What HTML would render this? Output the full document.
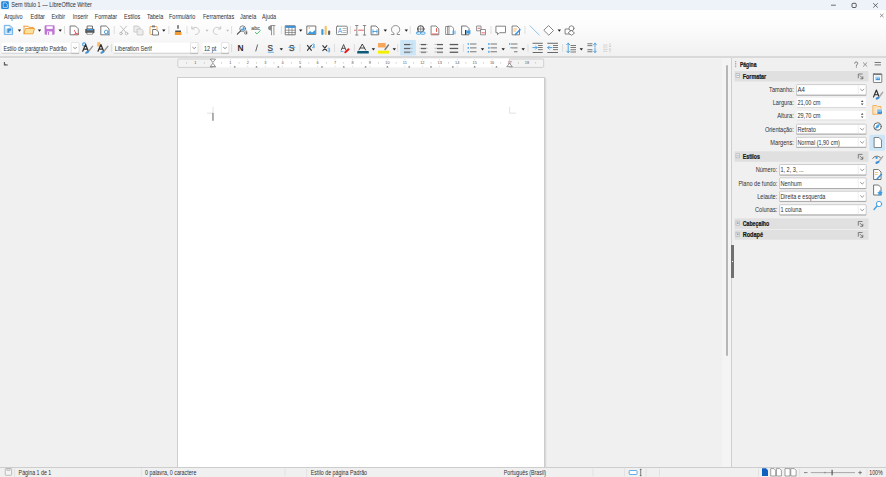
<!DOCTYPE html>
<html><head><meta charset="utf-8">
<style>
*{margin:0;padding:0;box-sizing:border-box}
html,body{width:886px;height:477px;overflow:hidden;background:#f0f0f0;font-family:"Liberation Sans",sans-serif;color:#222}
.a{position:absolute}
.t{position:absolute;white-space:nowrap;font-size:5.5px;line-height:7px}
</style></head><body>
<!-- title bar -->
<div class="a" style="left:0;top:0;width:886px;height:10.4px;background:#eef2f9"></div>
<!-- menu + toolbars -->
<div class="a" style="left:0;top:10.4px;width:886px;height:45.7px;background:linear-gradient(#ffffff 0%,#fdfdfd 30%,#f1f1f1 100%)"></div>
<div class="a" style="left:0;top:56.1px;width:886px;height:1.7px;background:#d9d9d9"></div>
<div class="a" style="left:0;top:57.8px;width:886px;height:0.9px;background:#f4f4f4"></div>
<svg class="a" style="left:0;top:0" width="886" height="22" viewBox="0 0 886 22">
<rect x="1.2" y="1.2" width="7.6" height="7.8" rx="1.3" fill="#1f83d9"></rect>
<path d="M3.2 2.8h2.5l1.6 1.6v3h-4.1z" fill="none" stroke="#fff" stroke-width="0.6"></path>
<path d="M831 5.2h4.8" stroke="#333" stroke-width="0.7"></path>
<rect x="852" y="3.3" width="4.2" height="4.2" rx="1" fill="none" stroke="#333" stroke-width="0.8"></rect>
<path d="M873.2 3.2l4.6 4.4M877.8 3.2l-4.6 4.4" stroke="#333" stroke-width="0.7"></path>
<path d="M880 13.8l3.6 3.4M883.6 13.8l-3.6 3.4" stroke="#555" stroke-width="0.6"></path>
<g font-family="Liberation Sans" font-size="5.5" fill="#222">
<text x="11.3" y="7.40" font-size="6.4" textLength="80.50" lengthAdjust="spacingAndGlyphs" style="font-size: 6.4px; fill: rgb(48, 48, 48);">Sem título 1 — LibreOffice Writer</text>
</g>
<g font-family="Liberation Sans" font-size="5.5" fill="#222">
<text x="4" y="18.50" font-size="6.4" textLength="18.66" lengthAdjust="spacingAndGlyphs" style="font-size: 6.4px; fill: rgb(48, 48, 48);">Arquivo</text>
<text x="30.5" y="18.50" font-size="6.4" textLength="14.38" lengthAdjust="spacingAndGlyphs" style="font-size: 6.4px; fill: rgb(48, 48, 48);">Editar</text>
<text x="51.4" y="18.50" font-size="6.4" textLength="13.77" lengthAdjust="spacingAndGlyphs" style="font-size: 6.4px; fill: rgb(48, 48, 48);">Exibir</text>
<text x="72.8" y="18.50" font-size="6.4" textLength="15.28" lengthAdjust="spacingAndGlyphs" style="font-size: 6.4px; fill: rgb(48, 48, 48);">Inserir</text>
<text x="94.8" y="18.50" font-size="6.4" textLength="22.31" lengthAdjust="spacingAndGlyphs" style="font-size: 6.4px; fill: rgb(48, 48, 48);">Formatar</text>
<text x="124" y="18.50" font-size="6.4" textLength="16.20" lengthAdjust="spacingAndGlyphs" style="font-size: 6.4px; fill: rgb(48, 48, 48);">Estilos</text>
<text x="147" y="18.50" font-size="6.4" textLength="16.22" lengthAdjust="spacingAndGlyphs" style="font-size: 6.4px; fill: rgb(48, 48, 48);">Tabela</text>
<text x="169" y="18.50" font-size="6.4" textLength="26.30" lengthAdjust="spacingAndGlyphs" style="font-size: 6.4px; fill: rgb(48, 48, 48);">Formulário</text>
<text x="203" y="18.50" font-size="6.4" textLength="31.19" lengthAdjust="spacingAndGlyphs" style="font-size: 6.4px; fill: rgb(48, 48, 48);">Ferramentas</text>
<text x="240" y="18.50" font-size="6.4" textLength="16.22" lengthAdjust="spacingAndGlyphs" style="font-size: 6.4px; fill: rgb(48, 48, 48);">Janela</text>
<text x="262" y="18.50" font-size="6.4" textLength="14.08" lengthAdjust="spacingAndGlyphs" style="font-size: 6.4px; fill: rgb(48, 48, 48);">Ajuda</text>
</g>
</svg>
<svg class="a" style="left:0;top:0" width="886" height="58" viewBox="0 0 886 58">
<g fill="none" stroke-linejoin="round" stroke-linecap="round">
<!-- new doc -->
<path d="M4.7 25.4h5.3l2.6 2.6v6.4h-7.9z" fill="#c4e0f7" stroke="#62aae6" stroke-width="0.9"></path>
<rect x="5.6" y="26.3" width="3.6" height="2.3" fill="#fff" stroke="none"></rect>
<path d="M7.4 28.6h3.8v2.1h-1.9v2.1h-1.9z" fill="#3d8fd8" stroke="none"></path>
<rect x="5.6" y="33.1" width="6.1" height="0.6" fill="#fff" stroke="none"></rect>
<!-- open folder -->
<path d="M24 26.2h4l1 1.2h4.3v1.5" fill="#fbd9a5" stroke="#f19a33" stroke-width="0.9"></path>
<path d="M24 26.2v7.6h9l1.5-5.3h-9l-1.5 5.3" fill="#fbe29a" stroke="#f19a33" stroke-width="0.9"></path>
<!-- save -->
<rect x="44.6" y="25.3" width="10" height="9.5" rx="1.2" fill="#c075d6"></rect>
<rect x="46.5" y="26.3" width="6.2" height="2.6" fill="#fff"></rect>
<rect x="47" y="31.5" width="5.2" height="3.3" fill="#fff"></rect>
<rect x="48" y="32" width="1" height="2.8" fill="#c075d6"></rect>
<!-- pdf -->
<path d="M70.5 26h5l2.8 2.8v6h-7.8z" fill="#fff" stroke="#6a6a6a" stroke-width="0.9"></path>
<path d="M74.5 30.5l1.5 3l2.5 0.5M76 33.5l-2 1" stroke="#e84545" stroke-width="0.9"></path>
<!-- print -->
<rect x="87.5" y="26" width="5" height="3" fill="#fff" stroke="#555" stroke-width="0.8"></rect>
<rect x="85.2" y="28.8" width="9.3" height="4.4" rx="1" fill="#5a5a5a"></rect>
<rect x="87" y="29" width="6" height="1.4" fill="#3d9be0"></rect>
<rect x="87.3" y="32.5" width="5.3" height="1.8" fill="#fff" stroke="#666" stroke-width="0.6"></rect>
<!-- preview -->
<path d="M101.2 26h5l2.8 2.8v6h-7.8z" fill="#fff" stroke="#6a6a6a" stroke-width="0.9"></path>
<circle cx="106.2" cy="32" r="1.8" fill="#fff" stroke="#3d9be0" stroke-width="0.9"></circle>
<path d="M107.5 33.3l2 1.7" stroke="#3d9be0" stroke-width="0.9"></path>
<!-- cut -->
<path d="M120.5 26l5.5 6.5M126.5 26l-5.5 6.5" stroke="#b3b3b3" stroke-width="0.8"></path>
<circle cx="121" cy="33.5" r="1.3" stroke="#b3b3b3" stroke-width="0.8"></circle>
<circle cx="126.5" cy="33.5" r="1.3" stroke="#b3b3b3" stroke-width="0.8"></circle>
<!-- copy -->
<path d="M134.3 26h4l1.5 1.5v4.5h-5.5z" fill="#ececec" stroke="#c2c2c2" stroke-width="0.8"></path>
<path d="M137.5 29h4l1.5 1.5v4.5h-5.5z" fill="#ececec" stroke="#c2c2c2" stroke-width="0.8"></path>
<!-- paste -->
<rect x="150" y="26.5" width="7" height="8" rx="0.6" fill="#fff" stroke="#f4a23e" stroke-width="0.9"></rect>
<rect x="152" y="25.5" width="3" height="1.8" fill="#777"></rect>
<path d="M153 29.5h3l2.5 2.5v3h-5.5z" fill="#fff" stroke="#555" stroke-width="0.8"></path>
<!-- clone -->
<rect x="177.3" y="25.2" width="1.4" height="3.5" fill="#555"></rect>
<path d="M175.2 30.5h5.8v2h-5.8z" fill="#555"></path>
<path d="M174.8 32h6.6v3h-6.6z" fill="#f39a2e"></path>
<!-- undo / redo (disabled) -->
<path d="M192 28.5c2.5-2 6-1.5 7 1.5s-1.5 4.5-3.5 4.5" stroke="#c4c4c4" stroke-width="0.9"></path>
<path d="M191.8 26.5v2.5h2.5" stroke="#c4c4c4" stroke-width="0.9"></path>
<path d="M220.5 28.5c-2.5-2-6-1.5-7 1.5s1.5 4.5 3.5 4.5" stroke="#c4c4c4" stroke-width="0.9"></path>
<path d="M220.7 26.5v2.5h-2.5" stroke="#c4c4c4" stroke-width="0.9"></path>
<!-- find & replace -->
<circle cx="242.7" cy="28.7" r="2.9" fill="#fff" stroke="#6a6a6a" stroke-width="0.8"></circle>
<path d="M242.7 26.6a2.1 2.1 0 1 1 -2.1 2.1h2.1z" fill="#4aa3e4"></path>
<path d="M240.7 30.9l-3.4 3.3" stroke="#444" stroke-width="1.1"></path>
<circle cx="245.6" cy="33" r="1.1" stroke="#666" stroke-width="0.8"></circle>
<path d="M246.7 30.8v3.2" stroke="#666" stroke-width="0.8"></path>
<!-- spelling -->
<text x="251.3" y="29.6" font-size="5.3" fill="#666" stroke="#666" stroke-width="0.15" font-family="Liberation Sans">abc</text>
<path d="M255.3 32.4l1.6 1.5l3.5-3.3" stroke="#3cb85c" stroke-width="0.9"></path>
<!-- pilcrow -->
<path d="M271.2 25.5c-1.9 0-3.2 1.1-3.2 2.5s1.3 2.5 3.2 2.5z" fill="#8a8a8a"></path>
<path d="M275 25.5h-4M271.5 25.5v9.3M273.9 25.5v9.3" stroke="#8a8a8a" stroke-width="0.9"></path>
<!-- table -->
<rect x="285.6" y="25.8" width="9.6" height="9" fill="#fff" stroke="#6a6a6a" stroke-width="0.9"></rect>
<rect x="285.6" y="25.8" width="9.6" height="2.1" fill="#3d8fd8"></rect>
<path d="M288.8 27.9v6.9M292 27.9v6.9M285.6 30.2h9.6M285.6 32.5h9.6" stroke="#777" stroke-width="0.7"></path>
<!-- image -->
<rect x="307.2" y="26" width="8.6" height="8.4" fill="#fff" stroke="#666" stroke-width="0.9"></rect>
<path d="M307.5 34l2.5-3l2 1.5l3.5-2.8v4.3z" fill="#3d9be0"></path>
<circle cx="309.3" cy="28" r="0.8" fill="#f4a23e"></circle>
<!-- chart -->
<rect x="321.3" y="29" width="2.2" height="6" rx="1" fill="#3d9be0"></rect>
<rect x="324.6" y="25.7" width="2.2" height="9.3" rx="1" fill="#f6c26a"></rect>
<rect x="328" y="30.5" width="2.2" height="4.5" rx="1" fill="#666"></rect>
<!-- text box -->
<rect x="336.5" y="26.2" width="10.8" height="8.4" rx="0.8" fill="#fff" stroke="#777" stroke-width="0.9"></rect>
<text x="337.8" y="33.3" font-size="6.5" fill="#3d9be0" font-family="Liberation Sans">A</text>
<path d="M343 28.5h3M343 30.5h3M343 32.5h3" stroke="#888" stroke-width="0.6"></path>
<!-- page break -->
<path d="M356.8 25.5v9.5M364.5 25.5v9.5M355.5 25.5h2.6M355.5 35h2.6M363.2 25.5h2.6M363.2 35h2.6" stroke="#777" stroke-width="0.8"></path>
<path d="M358.5 30.2h5" stroke="#d44" stroke-width="0.8" stroke-dasharray="0.8 0.6"></path>
<circle cx="355" cy="30.2" r="0.7" fill="#e33"></circle>
<!-- field -->
<path d="M371.5 26h4.5l2.7 2.7v6.1h-7.2z" fill="#fff" stroke="#666" stroke-width="0.9"></path>
<path d="M373 29.8v3.4M377 29.8v3.4M373 31.5h4" stroke="#3d9be0" stroke-width="0.9"></path>
<!-- omega -->
<path d="M391.5 34.5h2.6v-1c-1.6-0.8-2.6-2.2-2.6-4c0-2.4 1.8-4 4.1-4s4.1 1.6 4.1 4c0 1.8-1 3.2-2.6 4v1h2.6" stroke="#777" stroke-width="0.8"></path>
<!-- hyperlink -->
<circle cx="420.7" cy="29" r="3.3" fill="#fff" stroke="#555" stroke-width="0.9"></circle>
<path d="M417.5 29h6.5M420.7 25.7v6.6M419 26c-1 2-1 4 0 6M422.4 26c1 2 1 4 0 6" stroke="#555" stroke-width="0.6"></path>
<rect x="416.3" y="32" width="4.5" height="2.2" rx="1.1" fill="#fff" stroke="#3d9be0" stroke-width="0.9"></rect>
<rect x="420.6" y="32" width="4.5" height="2.2" rx="1.1" fill="#fff" stroke="#3d9be0" stroke-width="0.9"></rect>
<!-- footnote -->
<path d="M431.5 26h4.5l2.8 2.8v6h-7.3z" fill="#fff" stroke="#777" stroke-width="0.9"></path>
<path d="M436.5 28.5v3M432.5 34h5" stroke="#e04545" stroke-width="0.9"></path>
<!-- endnote -->
<path d="M446 26.5h3v8h-3zM448 26.2h3.5l2 2v6.3h-5.5z" fill="#fff" stroke="#777" stroke-width="0.8"></path>
<path d="M453 31v3M455 31v3" stroke="#3d9be0" stroke-width="0.8"></path>
<!-- bookmark -->
<path d="M462 26h4.5l2.5 2.5v6.3h-7z" fill="#fff" stroke="#666" stroke-width="0.9"></path>
<rect x="465" y="30" width="1.3" height="4.8" fill="#333"></rect>
<path d="M466.3 30.5h4.7l-1 1.5l1 1.5h-4.7z" fill="#3d9be0"></path>
<!-- cross-ref -->
<path d="M477 26h4v4.8h-4z" fill="#fff" stroke="#777" stroke-width="0.8"></path>
<path d="M481 29.5h4.5v5.3h-4.5z" fill="#fff" stroke="#777" stroke-width="0.8"></path>
<path d="M478 28.3h2M482 32.8h2.5" stroke="#e04545" stroke-width="0.8"></path>
<!-- comment -->
<path d="M496.3 26.2h9.2v6.5h-6l-2 2v-2h-1.2z" fill="#fff" stroke="#777" stroke-width="0.9"></path>
<!-- track changes -->
<path d="M512.5 26h4.5l2.5 2.5v6.3h-7z" fill="#fff" stroke="#777" stroke-width="0.9"></path>
<path d="M513.8 29h3M513.8 31h2" stroke="#f39a2e" stroke-width="0.7"></path>
<path d="M515.5 34.5l4.5-4.8" stroke="#3d8fd8" stroke-width="1.5"></path>
<!-- line -->
<path d="M530 25.8l9.3 9.3" stroke="#7cbdea" stroke-width="0.9"></path>
<!-- diamond -->
<path d="M548.8 25.8l4.7 4.7l-4.7 4.7l-4.7-4.7z" fill="#fff" stroke="#777" stroke-width="0.9"></path>
<!-- shapes -->
<rect x="565.5" y="29" width="5" height="5" fill="#fff" stroke="#777" stroke-width="0.9"></rect>
<circle cx="571.5" cy="28.3" r="2.5" fill="#fff" stroke="#777" stroke-width="0.9"></circle>
<path d="M571.5 30.5l3 2.5l-3 2.3l-3-2.3z" fill="#fff" stroke="#777" stroke-width="0.9"></path>
</g>
<!-- dropdown arrows -->
<g fill="#1e1e1e">
<path d="M17.8 29.6h3.4l-1.7 2.2z"></path><path d="M37.8 29.6h3.4l-1.7 2.2z"></path><path d="M58.5 29.6h3.4l-1.7 2.2z"></path>
<path d="M162.1 29.6h3.4l-1.7 2.2z"></path><path d="M299 29.6h3.4l-1.7 2.2z"></path><path d="M383.6 29.6h3.4l-1.7 2.2z"></path>
<path d="M404.6 29.6h3.4l-1.7 2.2z"></path><path d="M557.6 29.6h3.4l-1.7 2.2z"></path>
</g>
<g fill="#bdbdbd"><path d="M205.5 29.8h3l-1.5 2z"></path><path d="M226.2 29.8h3l-1.5 2z"></path></g>
<!-- separators -->
<g fill="#d6d6d6">
<rect x="64.2" y="26" width="0.8" height="8"></rect><rect x="113.8" y="26" width="0.8" height="8"></rect><rect x="168.5" y="26" width="0.8" height="8"></rect>
<rect x="186.6" y="26" width="0.8" height="8"></rect><rect x="231.3" y="26" width="0.8" height="8"></rect><rect x="280.9" y="26" width="0.8" height="8"></rect>
<rect x="349.9" y="26" width="0.8" height="8"></rect><rect x="409.8" y="26" width="0.8" height="8"></rect><rect x="490.6" y="26" width="0.8" height="8"></rect>
<rect x="524.6" y="26" width="0.8" height="8"></rect>
</g>
</svg>

<svg class="a" style="left:0;top:0" width="886" height="58" viewBox="0 0 886 58">
<!-- combos -->
<g>
<rect x="1.7" y="42.6" width="77.3" height="11" fill="#fff"></rect>
<rect x="1.7" y="52.8" width="77.3" height="0.7" fill="#b8b8b8"></rect>
<rect x="71.2" y="42.6" width="7.8" height="11" rx="0.8" fill="#fff" stroke="#d2d2d2" stroke-width="0.6"></rect>
<rect x="71.2" y="52.8" width="7.8" height="0.8" fill="#a8a8a8"></rect>
<path d="M73.3 47.2l1.8 1.4l1.8-1.4" fill="none" stroke="#666" stroke-width="0.7"></path>

<rect x="113.6" y="42.6" width="84.4" height="11" fill="#fff"></rect>
<rect x="113.6" y="52.8" width="84.4" height="0.7" fill="#b8b8b8"></rect>
<rect x="190.5" y="42.6" width="7.5" height="11" rx="0.8" fill="#fff" stroke="#d2d2d2" stroke-width="0.6"></rect>
<rect x="190.5" y="52.8" width="7.5" height="0.8" fill="#a8a8a8"></rect>
<path d="M192.4 47.2l1.8 1.4l1.8-1.4" fill="none" stroke="#666" stroke-width="0.7"></path>

<rect x="202.5" y="42.6" width="26.3" height="11" fill="#fff"></rect>
<rect x="202.5" y="52.8" width="26.3" height="0.7" fill="#b8b8b8"></rect>
<rect x="221.3" y="42.6" width="7.5" height="11" rx="0.8" fill="#fff" stroke="#d2d2d2" stroke-width="0.6"></rect>
<rect x="221.3" y="52.8" width="7.5" height="0.8" fill="#a8a8a8"></rect>
<path d="M223.2 47.2l1.8 1.4l1.8-1.4" fill="none" stroke="#666" stroke-width="0.7"></path>
</g>
<g font-family="Liberation Sans" font-size="5.5" fill="#222">
<text x="3.4" y="50.70" textLength="63.20" lengthAdjust="spacingAndGlyphs" font-size="6.4" style="font-size: 6.4px; fill: rgb(48, 48, 48);">Estilo de parágrafo Padrão</text>
<text x="114.8" y="50.70" font-size="6.4" textLength="37.00" lengthAdjust="spacingAndGlyphs" style="font-size: 6.4px; fill: rgb(48, 48, 48);">Liberation Serif</text>
<text x="204" y="50.70" font-size="6.4" textLength="12.23" lengthAdjust="spacingAndGlyphs" style="font-size: 6.4px; fill: rgb(48, 48, 48);">12 pt</text>
</g>
<g fill="none" stroke-linecap="round" stroke-linejoin="round">
<!-- style icons -->
<circle cx="84.2" cy="44.5" r="1.6" fill="#fff" stroke="#3d9be0" stroke-width="1.1"></circle>
<path d="M82.7 51.2l2.9-6.6l2.7 6.6M83.8 49h3.4" stroke="#303030" stroke-width="1.25"></path>
<ellipse cx="87.2" cy="52.2" rx="2.2" ry="1.1" transform="rotate(-25 87.2 52.2)" fill="#3d8fd8"></ellipse>
<path d="M92.5 46.4l-3.3 4.2" stroke="#9a9a9a" stroke-width="1.5"></path>
<rect x="97.3" y="42.2" width="3" height="4.3" fill="#f7b86a"></rect>
<path d="M98 51.2l2.9-6.6l2.7 6.6M99.1 49h3.4" stroke="#303030" stroke-width="1.25"></path>
<ellipse cx="102.5" cy="52.2" rx="2.2" ry="1.1" transform="rotate(-25 102.5 52.2)" fill="#3d8fd8"></ellipse>
<path d="M107.8 46.4l-3.3 4.2" stroke="#9a9a9a" stroke-width="1.5"></path>
</g>
<g font-family="Liberation Sans" fill="#333">
<text x="237.6" y="50.8" font-size="8.4" font-weight="bold" fill="#2e2e2e">N</text>
<text x="267.6" y="50.7" font-size="8.2" fill="#444" stroke="#444" stroke-width="0.25">S</text>
<text x="289" y="51" font-size="8.2" fill="#444" stroke="#444" stroke-width="0.25">S</text>

</g>
<path d="M257.6 44.5l-1.9 6.9" stroke="#666" stroke-width="1" fill="none"></path>
<rect x="267.8" y="51.8" width="6" height="0.8" fill="#3d9be0"></rect>
<rect x="288.3" y="47" width="7" height="0.7" fill="#3d9be0"></rect>
<g fill="none" stroke-linecap="round">
<path d="M307.4 45.4l4 5M311.4 45.4l-4 5" stroke="#3a3a3a" stroke-width="1.1"></path>
<path d="M312.6 44.3c0.8-0.5 1.8-0.3 1.8 0.6s-0.9 1-1.3 1c0.6 0 1.4 0.3 1.4 1.1s-1.1 1.1-1.9 0.6" stroke="#3d9be0" stroke-width="0.9"></path>
<path d="M322.8 45.6l4 5M326.8 45.6l-4 5" stroke="#3a3a3a" stroke-width="1.1"></path>
<path d="M328 48.4c0.8-0.5 1.8-0.3 1.8 0.6s-0.9 1-1.3 1c0.6 0 1.4 0.3 1.4 1.1s-1.1 1.1-1.9 0.6" stroke="#3d9be0" stroke-width="0.9"></path>
</g>
<g fill="none" stroke-linecap="round" stroke-linejoin="round">
<!-- clear formatting -->
<path d="M341.3 50l2.3-5.5l2.2 5.5M342.2 48.3h2.8" stroke="#444" stroke-width="0.9"></path>
<path d="M341 51.5h2" stroke="#3d9be0" stroke-width="0.7"></path>
<path d="M345.3 52.3l3.3-3" stroke="#e02020" stroke-width="2"></path>
<!-- font color -->
<path d="M359 50l3.3-6l3.3 6M360.2 48h4.2" stroke="#333" stroke-width="0.9"></path>
<rect x="357.2" y="51" width="11.6" height="2.6" rx="0.4" fill="#0d5a78"></rect>
<!-- highlight -->
<rect x="378" y="43" width="7.7" height="4.5" rx="0.5" fill="#f7a65a"></rect>
<path d="M388.5 45l-3.5 4.5" stroke="#777" stroke-width="1.4"></path>
<rect x="378" y="50.7" width="11" height="2.9" fill="#f2f000"></rect>
</g>
<!-- align left highlight -->
<rect x="400.1" y="40" width="15.8" height="15.5" rx="1" fill="#cde6f7"></rect>
<g fill="#5a5a5a">
<rect x="404" y="43.95" width="6.2" height="1.1"></rect><rect x="410.2" y="43.95" width="2.4" height="0.6" fill="#999"></rect><rect x="404" y="45.05" width="6.2" height="0.5" fill="#bbb"></rect>
<rect x="421" y="43.95" width="5" height="1.1"></rect><rect x="419.3" y="43.95" width="1.7" height="0.6" fill="#999"></rect><rect x="426" y="43.95" width="1.7" height="0.6" fill="#999"></rect><rect x="421" y="45.05" width="5" height="0.5" fill="#bbb"></rect>
<rect x="437" y="43.95" width="6" height="1.1"></rect><rect x="434.5" y="43.95" width="2.5" height="0.6" fill="#999"></rect><rect x="437" y="45.05" width="6" height="0.5" fill="#bbb"></rect>
<rect x="449.7" y="43.90" width="8.5" height="1.3"></rect>
<rect x="404" y="47.85" width="6.2" height="1.1"></rect><rect x="410.2" y="47.85" width="2.4" height="0.6" fill="#999"></rect><rect x="404" y="48.95" width="6.2" height="0.5" fill="#bbb"></rect>
<rect x="421" y="47.85" width="5" height="1.1"></rect><rect x="419.3" y="47.85" width="1.7" height="0.6" fill="#999"></rect><rect x="426" y="47.85" width="1.7" height="0.6" fill="#999"></rect><rect x="421" y="48.95" width="5" height="0.5" fill="#bbb"></rect>
<rect x="437" y="47.85" width="6" height="1.1"></rect><rect x="434.5" y="47.85" width="2.5" height="0.6" fill="#999"></rect><rect x="437" y="48.95" width="6" height="0.5" fill="#bbb"></rect>
<rect x="449.7" y="47.80" width="8.5" height="1.3"></rect>
<rect x="404" y="51.65" width="6.2" height="1.1"></rect><rect x="410.2" y="51.65" width="2.4" height="0.6" fill="#999"></rect><rect x="404" y="52.75" width="6.2" height="0.5" fill="#bbb"></rect>
<rect x="421" y="51.65" width="5" height="1.1"></rect><rect x="419.3" y="51.65" width="1.7" height="0.6" fill="#999"></rect><rect x="426" y="51.65" width="1.7" height="0.6" fill="#999"></rect><rect x="421" y="52.75" width="5" height="0.5" fill="#bbb"></rect>
<rect x="437" y="51.65" width="6" height="1.1"></rect><rect x="434.5" y="51.65" width="2.5" height="0.6" fill="#999"></rect><rect x="437" y="52.75" width="6" height="0.5" fill="#bbb"></rect>
<rect x="449.7" y="51.60" width="8.5" height="1.3"></rect>
<!-- bullets -->
<rect x="470" y="43.6" width="6.5" height="0.8"></rect><rect x="470" y="47.5" width="6.5" height="0.8"></rect><rect x="470" y="51.4" width="6.5" height="0.8"></rect>
<rect x="490.5" y="43.6" width="6.5" height="0.8"></rect><rect x="490.5" y="47.5" width="6.5" height="0.8"></rect><rect x="490.5" y="51.4" width="6.5" height="0.8"></rect>
<rect x="511" y="43.6" width="6.5" height="0.8"></rect><rect x="512" y="47.5" width="5.5" height="0.8"></rect><rect x="514" y="51.4" width="3.5" height="0.8"></rect>
<!-- indent -->
<rect x="532.6" y="42.8" width="10.1" height="0.9"></rect><rect x="538" y="45.2" width="4.7" height="0.8"></rect><rect x="538" y="47.2" width="4.7" height="0.8"></rect><rect x="538" y="49.3" width="4.7" height="0.8"></rect><rect x="532.6" y="52" width="10.1" height="0.9"></rect>
<rect x="547.3" y="42.8" width="10.7" height="0.9"></rect><rect x="553" y="45.2" width="5" height="0.8"></rect><rect x="553" y="47.2" width="5" height="0.8"></rect><rect x="553" y="49.3" width="5" height="0.8"></rect><rect x="547.3" y="52" width="10.7" height="0.9"></rect>
<!-- line spacing -->
<rect x="570.5" y="45" width="5.5" height="0.8"></rect><rect x="570.5" y="47.2" width="5.5" height="0.8"></rect><rect x="570.5" y="49.4" width="5.5" height="0.8"></rect><rect x="570.5" y="51.6" width="5.5" height="0.8"></rect>
<rect x="587.4" y="43.4" width="5" height="0.8"></rect><rect x="587.4" y="45.3" width="5" height="0.8"></rect><rect x="587.4" y="49.4" width="5" height="0.8"></rect><rect x="587.4" y="51.4" width="5" height="0.8"></rect>
</g>
<g fill="#3d9be0">
<rect x="467.6" y="43.3" width="1.4" height="1.4"></rect><rect x="467.6" y="47.2" width="1.4" height="1.4"></rect><rect x="467.6" y="51.1" width="1.4" height="1.4"></rect>
<rect x="488.3" y="43" width="1.2" height="2"></rect><rect x="488.3" y="46.9" width="1.2" height="2"></rect><rect x="488.3" y="50.8" width="1.2" height="2"></rect>
<rect x="509" y="43.2" width="1.3" height="1.5"></rect><rect x="510.5" y="47.1" width="1.3" height="1.3"></rect>
</g>
<g fill="none" stroke="#3d9be0" stroke-width="0.9" stroke-linecap="round" stroke-linejoin="round">
<path d="M532.8 47.6h4.2M535.5 46l1.6 1.6l-1.6 1.6"></path>
<path d="M547.8 47.6h4.2M549.4 46l-1.6 1.6l1.6 1.6"></path>
<path d="M568.2 43.2v9.4M566.7 44.7l1.5-1.5l1.5 1.5M566.7 51.1l1.5 1.5l1.5-1.5"></path>
<path d="M595 43.2v4M593.6 44.6l1.4-1.4l1.4 1.4M595 48.5v4M593.6 51.1l1.4 1.4l1.4-1.4"></path>
</g>
<g fill="none" stroke="#cdcdcd" stroke-width="0.8">
<path d="M603 45h4.5M603 47h4.5M603 49.3h4.5M603 51.3h4.5M610 43v4M608.8 45.8l1.2 1.2l1.2-1.2M610 48.5v4M608.8 49.7l1.2-1.2l1.2 1.2"></path>
</g>
<g fill="#1e1e1e">
<path d="M279.6 48.2h3.4l-1.7 2.2z"></path><path d="M371.7 48.2h3.4l-1.7 2.2z"></path><path d="M392.6 48.2h3.4l-1.7 2.2z"></path>
<path d="M480.8 48.2h3.4l-1.7 2.2z"></path><path d="M501.5 48.2h3.4l-1.7 2.2z"></path><path d="M521.5 48.2h3.4l-1.7 2.2z"></path>
<path d="M579.6 48.2h3.4l-1.7 2.2z"></path>
</g>
<g fill="#d6d6d6">
<rect x="111.3" y="44" width="0.8" height="8"></rect><rect x="231.3" y="44" width="0.8" height="8"></rect><rect x="299.6" y="44" width="0.8" height="8"></rect>
<rect x="334.1" y="44" width="0.8" height="8"></rect><rect x="353.9" y="44" width="0.8" height="8"></rect><rect x="397.4" y="44" width="0.8" height="8"></rect>
<rect x="462.9" y="44" width="0.8" height="8"></rect><rect x="527.6" y="44" width="0.8" height="8"></rect><rect x="562.3" y="44" width="0.8" height="8"></rect>
</g>
</svg>

<!-- doc area -->
<div class="a" style="left:0;top:58.6px;width:722px;height:408px;background:#f0f0f0"></div>
<svg class="a" style="left:0;top:56px" width="20" height="20" viewBox="0 56 20 20"><path d="M4.4 62v3h3.4" fill="none" stroke="#555" stroke-width="1.1"></path><path d="M4.4 63.3l2.5 1.7h-2.5z" fill="#666"></path></svg>
<svg class="a" style="left:0;top:56px" width="886" height="22" viewBox="0 56 886 22">
<rect x="212.9" y="59" width="296.65" height="8.4" fill="#fff"></rect>
<path d="M212.9 59h-34.1a1 1 0 0 0 -1 1v6.4a1 1 0 0 0 1 1h34.1" fill="#f3f3f3" stroke="#c6c6c6" stroke-width="0.8"></path>
<path d="M509.55 59h33.15a1 1 0 0 1 1 1v6.4a1 1 0 0 1 -1 1h-33.15z" fill="#f3f3f3" stroke="#c6c6c6" stroke-width="0.8"></path>
<g font-family="Liberation Sans" font-size="3.9" fill="#555" text-anchor="middle">
<text x="195.45" y="64.4">1</text>
<text x="230.35" y="64.4">1</text>
<text x="247.80" y="64.4">2</text>
<text x="265.25" y="64.4">3</text>
<text x="282.70" y="64.4">4</text>
<text x="300.15" y="64.4">5</text>
<text x="317.60" y="64.4">6</text>
<text x="335.05" y="64.4">7</text>
<text x="352.50" y="64.4">8</text>
<text x="369.95" y="64.4">9</text>
<text x="387.40" y="64.4">10</text>
<text x="404.85" y="64.4">11</text>
<text x="422.30" y="64.4">12</text>
<text x="439.75" y="64.4">13</text>
<text x="457.20" y="64.4">14</text>
<text x="474.65" y="64.4">15</text>
<text x="492.10" y="64.4">16</text>
<text x="509.55" y="64.4">17</text>
<text x="527.00" y="64.4">18</text>
</g>
<g fill="#a0a0a0">
<rect x="186.43" y="62.3" width="0.6" height="1.2"></rect>
<rect x="203.88" y="62.3" width="0.6" height="1.2"></rect>
<rect x="221.32" y="62.3" width="0.6" height="1.2"></rect>
<rect x="238.77" y="62.3" width="0.6" height="1.2"></rect>
<rect x="256.22" y="62.3" width="0.6" height="1.2"></rect>
<rect x="273.68" y="62.3" width="0.6" height="1.2"></rect>
<rect x="291.12" y="62.3" width="0.6" height="1.2"></rect>
<rect x="308.57" y="62.3" width="0.6" height="1.2"></rect>
<rect x="326.02" y="62.3" width="0.6" height="1.2"></rect>
<rect x="343.47" y="62.3" width="0.6" height="1.2"></rect>
<rect x="360.93" y="62.3" width="0.6" height="1.2"></rect>
<rect x="378.38" y="62.3" width="0.6" height="1.2"></rect>
<rect x="395.82" y="62.3" width="0.6" height="1.2"></rect>
<rect x="413.27" y="62.3" width="0.6" height="1.2"></rect>
<rect x="430.72" y="62.3" width="0.6" height="1.2"></rect>
<rect x="448.18" y="62.3" width="0.6" height="1.2"></rect>
<rect x="465.62" y="62.3" width="0.6" height="1.2"></rect>
<rect x="483.07" y="62.3" width="0.6" height="1.2"></rect>
<rect x="500.53" y="62.3" width="0.6" height="1.2"></rect>
<rect x="517.98" y="62.3" width="0.6" height="1.2"></rect>
<rect x="535.43" y="62.3" width="0.6" height="1.2"></rect>
<rect x="230.05" y="59.5" width="0.6" height="0.7"></rect>
<rect x="230.05" y="65.9" width="0.6" height="0.7"></rect>
<rect x="247.50" y="59.5" width="0.6" height="0.7"></rect>
<rect x="247.50" y="65.9" width="0.6" height="0.7"></rect>
<rect x="264.95" y="59.5" width="0.6" height="0.7"></rect>
<rect x="264.95" y="65.9" width="0.6" height="0.7"></rect>
<rect x="282.40" y="59.5" width="0.6" height="0.7"></rect>
<rect x="282.40" y="65.9" width="0.6" height="0.7"></rect>
<rect x="299.85" y="59.5" width="0.6" height="0.7"></rect>
<rect x="299.85" y="65.9" width="0.6" height="0.7"></rect>
<rect x="317.30" y="59.5" width="0.6" height="0.7"></rect>
<rect x="317.30" y="65.9" width="0.6" height="0.7"></rect>
<rect x="334.75" y="59.5" width="0.6" height="0.7"></rect>
<rect x="334.75" y="65.9" width="0.6" height="0.7"></rect>
<rect x="352.20" y="59.5" width="0.6" height="0.7"></rect>
<rect x="352.20" y="65.9" width="0.6" height="0.7"></rect>
<rect x="369.65" y="59.5" width="0.6" height="0.7"></rect>
<rect x="369.65" y="65.9" width="0.6" height="0.7"></rect>
<rect x="387.10" y="59.5" width="0.6" height="0.7"></rect>
<rect x="387.10" y="65.9" width="0.6" height="0.7"></rect>
<rect x="404.55" y="59.5" width="0.6" height="0.7"></rect>
<rect x="404.55" y="65.9" width="0.6" height="0.7"></rect>
<rect x="422.00" y="59.5" width="0.6" height="0.7"></rect>
<rect x="422.00" y="65.9" width="0.6" height="0.7"></rect>
<rect x="439.45" y="59.5" width="0.6" height="0.7"></rect>
<rect x="439.45" y="65.9" width="0.6" height="0.7"></rect>
<rect x="456.90" y="59.5" width="0.6" height="0.7"></rect>
<rect x="456.90" y="65.9" width="0.6" height="0.7"></rect>
<rect x="474.35" y="59.5" width="0.6" height="0.7"></rect>
<rect x="474.35" y="65.9" width="0.6" height="0.7"></rect>
<rect x="491.80" y="59.5" width="0.6" height="0.7"></rect>
<rect x="491.80" y="65.9" width="0.6" height="0.7"></rect>
</g>
<g fill="none" stroke="#555" stroke-width="0.6">
<path d="M233.81 67.1h1.8M234.71 67.1v-1"></path>
<path d="M255.62 67.1h1.8M256.52 67.1v-1"></path>
<path d="M277.44 67.1h1.8M278.34 67.1v-1"></path>
<path d="M299.25 67.1h1.8M300.15 67.1v-1"></path>
<path d="M321.06 67.1h1.8M321.96 67.1v-1"></path>
<path d="M342.88 67.1h1.8M343.77 67.1v-1"></path>
<path d="M364.69 67.1h1.8M365.59 67.1v-1"></path>
<path d="M386.50 67.1h1.8M387.40 67.1v-1"></path>
<path d="M408.31 67.1h1.8M409.21 67.1v-1"></path>
<path d="M430.12 67.1h1.8M431.02 67.1v-1"></path>
<path d="M451.94 67.1h1.8M452.84 67.1v-1"></path>
<path d="M473.75 67.1h1.8M474.65 67.1v-1"></path>
<path d="M495.56 67.1h1.8M496.46 67.1v-1"></path>
</g>
<path d="M210.3 59.1h5.2l-2.6 3.4z" fill="#fff" stroke="#6a6a6a" stroke-width="0.7"></path>
<path d="M210.3 66.6h5.2l-2.6 -3.4z" fill="#fff" stroke="#6a6a6a" stroke-width="0.7"></path>
<rect x="210.1" y="66.5" width="5.6" height="0.8" fill="#8a8a8a"></rect>
<path d="M506.75 66.7h5.6l-2.8 -3.4z" fill="#fff" stroke="#6a6a6a" stroke-width="0.7"></path>
</svg>
<!-- page -->
<div class="a" style="left:177px;top:76.7px;width:367.8px;height:392px;background:#fff;border:1px solid #cdcdcd;box-shadow:0.6px 0.6px 1.2px #d2d2d2"></div>
<svg class="a" style="left:0;top:0" width="886" height="477" viewBox="0 0 886 477">
<g fill="none" stroke="#d0d0d0" stroke-width="0.6">
<path d="M213 106.8v6.4h-6M509.6 106.8v6.4h6.4"></path>
</g>
<rect x="212.2" y="112.9" width="1.5" height="7.9" fill="#959595"></rect>
</svg>
<!-- scrollbar -->
<div class="a" style="left:722px;top:58.6px;width:8.6px;height:408px;background:#f4f4f4"></div>
<div class="a" style="left:725.9px;top:65px;width:1.8px;height:291px;background:#b6b6b6;border-radius:1px"></div>
<div class="a" style="left:731px;top:58px;width:155px;height:409px;background:#f0f0f0"></div>
<div class="a" style="left:730.6px;top:58px;width:0.8px;height:409px;background:#cfcfcf"></div>
<div class="a" style="left:731px;top:245px;width:3.3px;height:33px;background:#707070"></div>
<div class="a" style="left:732.2px;top:260.5px;width:1px;height:1.5px;background:#fff"></div>
<svg class="a" style="left:0;top:0" width="886" height="477" viewBox="0 0 886 477">
<!-- grip -->
<g fill="#777"><rect x="735.3" y="61.2" width="0.9" height="0.9"></rect><rect x="735.3" y="62.9" width="0.9" height="0.9"></rect><rect x="735.3" y="64.6" width="0.9" height="0.9"></rect><rect x="735.3" y="66.3" width="0.9" height="0.9"></rect></g>
<!-- header icons -->
<g fill="none" stroke="#555" stroke-width="0.6" stroke-linecap="round">
<path d="M863.3 62.7l3.6 3.6M866.9 62.7l-3.6 3.6"></path>
<path d="M875 62.5h5.5M875 64.9h5.5" stroke-width="0.8"></path>
</g>
<path d="M854.7 63.6c0-1.1 0.7-1.6 1.5-1.6s1.5 0.5 1.5 1.4c0 1.1-1.4 1.2-1.4 2.4v0.3" fill="none" stroke="#555" stroke-width="0.8"></path><rect x="855.9" y="66.6" width="0.9" height="0.9" fill="#555"></rect>
<!-- section header bands -->
<g fill="#e0e0e0">
<rect x="734.5" y="71" width="134" height="10.5"></rect>
<rect x="734.5" y="151.3" width="134" height="10.6"></rect>
<rect x="734.5" y="218.4" width="134" height="10.6"></rect>
<rect x="734.5" y="229.8" width="134" height="9.9"></rect>
</g>
<g fill="#f2f2f2" stroke="#a8a8a8" stroke-width="0.6">
<rect x="736" y="73.4" width="3.6" height="4.1"></rect>
<rect x="736" y="153.8" width="3.6" height="4.1"></rect>
<rect x="736" y="221.1" width="3.6" height="4.1"></rect>
<rect x="736" y="232.2" width="3.6" height="4.1"></rect>
</g>
<g fill="none" stroke="#5a7fb0" stroke-width="0.6">
<path d="M736.8 75.45h2M736.8 155.85h2M736.8 223.15h2M737.8 222.1v2.1M736.8 234.25h2M737.8 233.2v2.1"></path>
</g>
<g fill="none" stroke="#555" stroke-width="0.7">
<path d="M858.3 78.2v-4.2h4.2M859.8 75.5l3 3M862.8 76.3v2.5h-2.5"></path>
<path d="M858.3 158.6v-4.2h4.2M859.8 155.9l3 3M862.8 156.7v2.5h-2.5"></path>
<path d="M858.3 225.7v-4.2h4.2M859.8 223l3 3M862.8 223.8v2.5h-2.5"></path>
<path d="M858.3 236.7v-4.2h4.2M859.8 234l3 3M862.8 234.8v2.5h-2.5"></path>
</g>
<!-- controls -->
<g fill="#fff" stroke="#bdbdbd" stroke-width="0.75">
<rect x="796.5" y="84.6" width="69.7" height="10.8" rx="0.8"></rect>
<rect x="796.5" y="124.2" width="69.7" height="10.2" rx="0.8"></rect>
<rect x="796.5" y="137.3" width="69.7" height="10.2" rx="0.8"></rect>
<rect x="779.6" y="164.5" width="86.6" height="10.8" rx="0.8"></rect>
<rect x="779.6" y="177.9" width="86.6" height="10.8" rx="0.8"></rect>
<rect x="779.6" y="191.2" width="86.6" height="10.4" rx="0.8"></rect>
<rect x="779.6" y="204.7" width="86.6" height="10.5" rx="0.8"></rect>
</g>
<g fill="#fff">
<rect x="796.8" y="97.8" width="69" height="10"></rect>
<rect x="796.8" y="110.9" width="69" height="9.5"></rect>
</g>
<g fill="#a0a0a0">
<rect x="796.5" y="94.7" width="69.7" height="0.8"></rect>
<rect x="796.5" y="133.6" width="69.7" height="0.8"></rect>
<rect x="796.5" y="146.8" width="69.7" height="0.8"></rect>
<rect x="779.6" y="174.6" width="86.6" height="0.8"></rect>
<rect x="779.6" y="188" width="86.6" height="0.8"></rect>
<rect x="779.6" y="200.9" width="86.6" height="0.8"></rect>
<rect x="779.6" y="214.5" width="86.6" height="0.8"></rect>
<rect x="796.8" y="107.2" width="69" height="0.6" fill="#c4c4c4"></rect>
<rect x="796.8" y="119.7" width="69" height="0.6" fill="#c4c4c4"></rect>
</g>
<g fill="none" stroke="#dadada" stroke-width="0.5">
<path d="M858.2 84.8v10.3M858.2 124.4v9.7M858.2 137.5v9.7M858.2 164.7v10.3M858.2 178.1v10.3M858.2 191.4v9.9M858.2 204.9v10"></path>
</g>
<g fill="none" stroke="#6e6e6e" stroke-width="0.7">
<path d="M860.2 88.9l2 1.9l2-1.9M860.2 128.2l2 1.9l2-1.9M860.2 141.3l2 1.9l2-1.9M860.2 168.9l2 1.9l2-1.9M860.2 182.2l2 1.9l2-1.9M860.2 195.4l2 1.9l2-1.9M860.2 208.9l2 1.9l2-1.9"></path>
</g>
<g fill="#444">
<path d="M860.9 101.9h2.6l-1.3-1.6zM860.9 103.6h2.6l-1.3 1.6z"></path>
<path d="M860.9 114.7h2.6l-1.3-1.6zM860.9 116.4h2.6l-1.3 1.6z"></path>
</g>
<!-- labels -->
<g font-family="Liberation Sans" font-size="5.45" fill="#222" text-anchor="end">
<text x="793.8" y="92.30" font-size="6.4" textLength="24.69" lengthAdjust="spacingAndGlyphs" style="font-size: 6.4px; fill: rgb(48, 48, 48);">Tamanho:</text>
<text x="793.8" y="105.40" font-size="6.4" textLength="21.07" lengthAdjust="spacingAndGlyphs" style="font-size: 6.4px; fill: rgb(48, 48, 48);">Largura:</text>
<text x="793.8" y="118.20" font-size="6.4" textLength="16.52" lengthAdjust="spacingAndGlyphs" style="font-size: 6.4px; fill: rgb(48, 48, 48);">Altura:</text>
<text x="793.8" y="131.80" font-size="6.4" textLength="28.91" lengthAdjust="spacingAndGlyphs" style="font-size: 6.4px; fill: rgb(48, 48, 48);">Orientação:</text>
<text x="793.8" y="145.00" font-size="6.4" textLength="23.47" lengthAdjust="spacingAndGlyphs" style="font-size: 6.4px; fill: rgb(48, 48, 48);">Margens:</text>
<text x="777.3" y="172.30" font-size="6.4" textLength="21.66" lengthAdjust="spacingAndGlyphs" style="font-size: 6.4px; fill: rgb(48, 48, 48);">Número:</text>
<text x="777.3" y="185.70" font-size="6.4" textLength="38.91" lengthAdjust="spacingAndGlyphs" style="font-size: 6.4px; fill: rgb(48, 48, 48);">Plano de fundo:</text>
<text x="777.3" y="198.90" font-size="6.4" textLength="20.16" lengthAdjust="spacingAndGlyphs" style="font-size: 6.4px; fill: rgb(48, 48, 48);">Leiaute:</text>
<text x="777.3" y="212.40" font-size="6.4" textLength="22.27" lengthAdjust="spacingAndGlyphs" style="font-size: 6.4px; fill: rgb(48, 48, 48);">Colunas:</text>
</g>
<g font-family="Liberation Sans" font-size="5.4" fill="#1e1e1e">
<text x="797.40" y="92.30" font-size="6.4" textLength="7.39" lengthAdjust="spacingAndGlyphs" style="font-size: 6.4px; fill: rgb(48, 48, 48);">A4</text>
<text x="797.40" y="105.40" font-size="6.4" textLength="22.99" lengthAdjust="spacingAndGlyphs" style="font-size: 6.4px; fill: rgb(48, 48, 48);">21,00 cm</text>
<text x="797.40" y="118.20" font-size="6.4" textLength="22.99" lengthAdjust="spacingAndGlyphs" style="font-size: 6.4px; fill: rgb(48, 48, 48);">29,70 cm</text>
<text x="797.40" y="131.80" font-size="6.4" textLength="18.49" lengthAdjust="spacingAndGlyphs" style="font-size: 6.4px; fill: rgb(48, 48, 48);">Retrato</text>
<text x="797.40" y="145.00" font-size="6.4" textLength="42.44" lengthAdjust="spacingAndGlyphs" style="font-size: 6.4px; fill: rgb(48, 48, 48);">Normal (1,90 cm)</text>
<text x="780.40" y="172.30" font-size="6.4" textLength="23.28" lengthAdjust="spacingAndGlyphs" style="font-size: 6.4px; fill: rgb(48, 48, 48);">1, 2, 3, ...</text>
<text x="780.40" y="185.70" font-size="6.4" textLength="21.19" lengthAdjust="spacingAndGlyphs" style="font-size: 6.4px; fill: rgb(48, 48, 48);">Nenhum</text>
<text x="780.40" y="198.90" font-size="6.4" textLength="44.86" lengthAdjust="spacingAndGlyphs" style="font-size: 6.4px; fill: rgb(48, 48, 48);">Direita e esquerda</text>
<text x="780.40" y="212.40" font-size="6.4" textLength="21.19" lengthAdjust="spacingAndGlyphs" style="font-size: 6.4px; fill: rgb(48, 48, 48);">1 coluna</text>
</g>
<g font-family="Liberation Sans" font-size="5.4" font-weight="bold" fill="#1a1a1a">
<text x="739.9" y="66.90" font-size="6.4" textLength="16.60" lengthAdjust="spacingAndGlyphs" style="font-size: 6.4px; fill: rgb(21, 21, 21); stroke: rgb(21, 21, 21); stroke-width: 0.2px;">Página</text>
<text x="742.7" y="78.70" font-size="6.4" textLength="23.40" lengthAdjust="spacingAndGlyphs" style="font-size: 6.4px; fill: rgb(21, 21, 21); stroke: rgb(21, 21, 21); stroke-width: 0.2px;">Formatar</text>
<text x="742.7" y="159.10" font-size="6.4" textLength="17.30" lengthAdjust="spacingAndGlyphs" style="font-size: 6.4px; fill: rgb(21, 21, 21); stroke: rgb(21, 21, 21); stroke-width: 0.2px;">Estilos</text>
<text x="742.7" y="226.20" font-size="6.4" textLength="26.60" lengthAdjust="spacingAndGlyphs" style="font-size: 6.4px; fill: rgb(21, 21, 21); stroke: rgb(21, 21, 21); stroke-width: 0.2px;">Cabeçalho</text>
<text x="742.7" y="237.10" font-size="6.4" textLength="20.40" lengthAdjust="spacingAndGlyphs" style="font-size: 6.4px; fill: rgb(21, 21, 21); stroke: rgb(21, 21, 21); stroke-width: 0.2px;">Rodapé</text>
</g>
<!-- tab bar -->
<rect x="869.4" y="134.8" width="15.6" height="16" rx="1.5" fill="#cde6f7"></rect>
<g fill="none" stroke-linecap="round" stroke-linejoin="round">
<rect x="873.4" y="73.8" width="8.4" height="8.7" rx="0.5" fill="#fff" stroke="#666" stroke-width="0.8"></rect>
<rect x="873.4" y="73.8" width="8.4" height="1.3" fill="#777"></rect>
<rect x="875.3" y="76.6" width="4.6" height="3.8" fill="#9fcdf0"></rect>
<path d="M875.6 80l1.8-1.8l1.2 1l1.3-1.5v2.3z" fill="#3d8fd8"></path>
<path d="M873.5 97l2.9-7l2.7 7M874.6 94.7h3.5" stroke="#303030" stroke-width="1.15"></path>
<ellipse cx="877.6" cy="98.2" rx="2.1" ry="1.2" transform="rotate(-25 877.6 98.2)" fill="#3d8fd8"></ellipse>
<path d="M882.6 92.4l-3.2 4.4" stroke="#aaa" stroke-width="1.6"></path>
<path d="M873.2 105.5h3.5l1 1h3.3v7.8h-7.8z" fill="#fde2b8" stroke="#f3a54a" stroke-width="0.8"></path>
<rect x="876.6" y="108.8" width="5.8" height="5.4" fill="#fff"></rect>
<rect x="877.1" y="109.3" width="4.8" height="4.4" fill="#7fbdec"></rect>
<path d="M877.1 113.7l1.8-2l1.3 1l1.7-1.6v2.6z" fill="#2f7fd0"></path>
<circle cx="877.5" cy="126.5" r="3.7" fill="#fff" stroke="#666" stroke-width="1"></circle>
<path d="M879.5 124.5l-1.2 2.8l-2.8 1.2l1.2-2.8z" fill="#3d9be0" stroke="#3d9be0" stroke-width="0.7"></path>
<path d="M874.5 137.5h4.5l2.5 2.5v7.5h-7z" fill="#fff" stroke="#6a6a6a" stroke-width="0.8"></path>
<path d="M872.8 158.3c1.5-2.4 5.2-2.9 7.6-0.7" stroke="#555" stroke-width="0.9"></path>
<circle cx="876.6" cy="157.9" r="1.1" fill="#3d9be0"></circle>
<path d="M882.6 156.6l-3.6 4.6" stroke="#aaa" stroke-width="1.5"></path>
<ellipse cx="877.4" cy="162.4" rx="2.2" ry="1.2" transform="rotate(-25 877.4 162.4)" fill="#3d8fd8"></ellipse>
<path d="M874 169.5h4.5l2.5 2.5v7.5h-7z" fill="#fff" stroke="#555" stroke-width="0.8"></path>
<path d="M875.3 172.5h2.5M875.3 174.5h2" stroke="#f39a2e" stroke-width="0.6"></path>
<path d="M877 179l4.5-4.8" stroke="#3d8fd8" stroke-width="1.4"></path>
<path d="M874 185h4.5l2.5 2.5v7.5h-7z" fill="#fff" stroke="#555" stroke-width="0.8"></path>
<path d="M880 190.5l0.8 1.6l1.6 0.4l-1.2 1.2l0.3 1.6l-1.5-0.8l-1.5 0.8l0.3-1.6l-1.2-1.2l1.6-0.4z" fill="#3d9be0" stroke="#3d9be0" stroke-width="0.4"></path>
<circle cx="879" cy="204" r="2.7" fill="#fff" stroke="#3d9be0" stroke-width="0.9"></circle>
<path d="M877 206l-3 3.5" stroke="#3d9be0" stroke-width="1.2"></path>
</g>
</svg>

<div class="a" style="left:0;top:466.8px;width:886px;height:1.1px;background:#cdcdcd"></div>
<div class="a" style="left:0;top:467.9px;width:886px;height:9.1px;background:#f0f0f0"></div>
<svg class="a" style="left:0;top:0" width="886" height="477" viewBox="0 0 886 477">
<g fill="#dcdcdc">
<rect x="14.4" y="468.5" width="0.7" height="8"></rect><rect x="140.9" y="468.5" width="0.7" height="8"></rect>
<rect x="284.7" y="468.5" width="0.7" height="8"></rect><rect x="306.4" y="468.5" width="0.7" height="8"></rect>
<rect x="592.6" y="468.5" width="0.7" height="8"></rect><rect x="624.2" y="468.5" width="0.7" height="8"></rect>
<rect x="645.7" y="468.5" width="0.7" height="8"></rect><rect x="659.2" y="468.5" width="0.7" height="8"></rect>
<rect x="758.3" y="468.5" width="0.7" height="8"></rect><rect x="799.4" y="468.5" width="0.7" height="8"></rect>
<rect x="866.6" y="468.5" width="0.7" height="8"></rect>
</g>
<g fill="none" stroke-linejoin="round">
<rect x="5.3" y="468.5" width="6.3" height="6.8" rx="0.6" fill="#f4f4f4" stroke="#a9a9a9" stroke-width="0.7"></rect>
<rect x="6.8" y="468.5" width="3.3" height="2" fill="#ddd" stroke="#a9a9a9" stroke-width="0.5"></rect>
<rect x="629.2" y="470.5" width="7.8" height="4" rx="0.8" fill="#fff" stroke="#3d9be0" stroke-width="0.8"></rect>
<path d="M639.8 469.3h1.8M640.7 469.3v6.4M639.8 475.7h1.8" stroke="#333" stroke-width="0.6"></path>
<path d="M762 468.3h4l2 2v5.8h-6z" fill="#0f5fbf"></path>
<path d="M770.7 468.6h3.2l1.8 1.8v5.6h-5z M776.4 468.6h3.2l1.8 1.8v5.6h-5z" fill="#fff" stroke="#666" stroke-width="0.6"></path>
<path d="M785 468.6h5v7.4h-5z M790.8 468.6h3.5l1.8 1.8v5.6h-5.3z" fill="#fff" stroke="#666" stroke-width="0.6"></path>
<path d="M804 472.6h3.5M858.3 472.6h3.6M860.1 470.8v3.6" stroke="#555" stroke-width="0.7"></path>
<path d="M810.8 472.6h44.2" stroke="#777" stroke-width="0.6"></path>
<path d="M825 471.8v1.6" stroke="#555" stroke-width="0.6"></path>
<rect x="831.5" y="469.8" width="1.2" height="5.5" fill="#555"></rect>
</g>
<g font-family="Liberation Sans" font-size="5.3" fill="#222">
<text x="18.6" y="474.5" font-size="6.4" textLength="32.70" lengthAdjust="spacingAndGlyphs" style="font-size: 6.4px; fill: rgb(48, 48, 48);">Página 1 de 1</text>
<text x="145.1" y="474.5" font-size="6.4" textLength="51.23" lengthAdjust="spacingAndGlyphs" style="font-size: 6.4px; fill: rgb(48, 48, 48);">0 palavra, 0 caractere</text>
<text x="310.8" y="474.5" font-size="6.4" textLength="56.25" lengthAdjust="spacingAndGlyphs" style="font-size: 6.4px; fill: rgb(48, 48, 48);">Estilo de página Padrão</text>
<text x="503.7" y="474.5" font-size="6.4" textLength="42.39" lengthAdjust="spacingAndGlyphs" style="font-size: 6.4px; fill: rgb(48, 48, 48);">Português (Brasil)</text>
<text x="869.2" y="474.5" font-size="6.4" textLength="13.56" lengthAdjust="spacingAndGlyphs" style="font-size: 6.4px; fill: rgb(48, 48, 48);">100%</text>
</g>
</svg>


</body></html>
